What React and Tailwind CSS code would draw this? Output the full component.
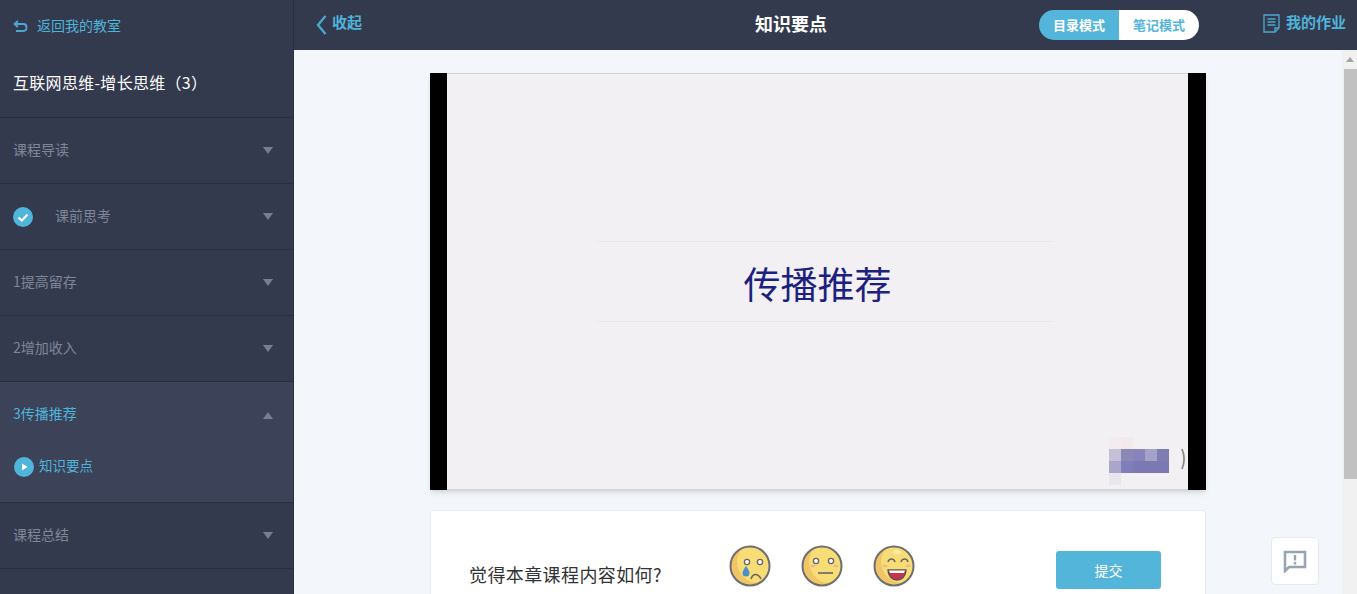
const font = { fontFamily: '"Noto Sans CJK SC", sans-serif' };

const Caret = ({ up }) => (
  <svg width="10" height="7" viewBox="0 0 10 7" className="shrink-0 fill-[#74808f]">
    <path d={up ? "M5 0L10 7H0Z" : "M0 0H10L5 7Z"} />
  </svg>
);

const MenuRow = ({ label, check }) => (
  <div className="h-[66px] border-b border-[#292e40] flex items-center pl-[13px] pr-5 text-sm text-[#7f8698]">
    {check && (
      <svg width="20" height="20" viewBox="0 0 20 20" className="mr-[22px] shrink-0">
        <circle cx="10" cy="10" r="10" fill="#4fb5da" />
        <path d="M5.5 10.5L8.8 13.5L14.5 7.5" fill="none" stroke="#fff" strokeWidth="2" />
      </svg>
    )}
    <span className="flex-1 -translate-y-0.5">{label}</span>
    <Caret />
  </div>
);

const Sidebar = () => (
  <aside className="w-[294px] shrink-0 h-full bg-[#343a4e] border-r border-[#292e40]">
    <div className="h-[118px] border-b border-[#292e40] pl-[13px]">
      <div className="h-[52px] flex items-center text-sm text-[#4fb3d9]">
        <svg width="15" height="12" viewBox="0 0 15 12" fill="none" stroke="#4aa8cf" strokeWidth="1.8" className="mr-[9px]">
          <path d="M5 1L1.5 4L5 7M2 4H10.5C13 4 13.5 6 13.5 7.5C13.5 9.5 12.5 11 10.5 11H3" />
        </svg>
        <span className="-translate-y-px">返回我的教室</span>
      </div>
      <div className="h-[64px] flex items-center text-base text-white">
        <span className="-translate-y-0.5 tracking-[0.3px]">互联网思维-增长思维（3）</span>
      </div>
    </div>
    <MenuRow label="课程导读" />
    <MenuRow label="课前思考" check />
    <MenuRow label="1提高留存" />
    <MenuRow label="2增加收入" />
    <div className="h-[121px] bg-[#3c4257] border-b border-[#292e40] pl-[13px] pr-5 text-sm text-[#4fb3d9]">
      <div className="h-[66px] flex items-center justify-between">
        <span className="-translate-y-0.5">3传播推荐</span>
        <Caret up />
      </div>
      <div className="flex items-center mt-[9px]">
        <svg width="20" height="20" viewBox="0 0 20 20" className="ml-px mr-[5px]">
          <circle cx="10" cy="10" r="10" fill="#4fb5da" />
          <path d="M8 6.5L13.5 10L8 13.5Z" fill="#fff" />
        </svg>
        <span className="text-[13.5px] -translate-y-px">知识要点</span>
      </div>
    </div>
    <MenuRow label="课程总结" />
  </aside>
);

const TopBar = () => (
  <header className="h-[50px] shrink-0 bg-[#343a4e] flex items-center pl-[22px] text-[#4fb3d9]">
    <svg width="11" height="20" viewBox="0 0 11 20" fill="none" stroke="#4aa8cf" strokeWidth="2.4" className="mr-[5px]">
      <path d="M9.5 1L2 10L9.5 19" />
    </svg>
    <span className="text-[15px] font-bold -translate-y-[3px]">收起</span>
    <h1 className="ml-[393px] text-lg font-bold text-white -translate-y-0.5">知识要点</h1>
    <div className="ml-[212px] w-40 h-[30px] rounded-full overflow-hidden flex text-[13px] font-bold">
      <div className="w-20 bg-[#54b5da] text-white flex items-center justify-center">目录模式</div>
      <div className="w-20 bg-white text-[#54b5da] flex items-center justify-center">笔记模式</div>
    </div>
    <svg width="17" height="19" viewBox="0 0 17 19" fill="none" stroke="#4aa8cf" strokeWidth="1.3" className="ml-16 mr-[6px] -translate-y-0.5">
      <path d="M1 1H16V14L12 18H1Z" />
      <path d="M4.5 5H12.5M4.5 8H12.5M4.5 11H12.5" />
      <path d="M12 18V14H16" />
    </svg>
    <span className="text-[15px] font-bold -translate-y-[3px]">我的作业</span>
  </header>
);

const Face = ({ children }) => (
  <svg width="42" height="42" viewBox="0 0 42 42">
    <circle cx="21" cy="21" r="19.5" fill="#f8dc76" />
    <path d="M13 3.500A19 19 0 0 0 21 40A19 19 0 0 0 29 38A21 21 0 0 1 13 3.500Z" fill="#efc566" />
    <circle cx="21" cy="21" r="19.5" fill="none" stroke="#6e6e6e" strokeWidth="2" />
    {children}
  </svg>
);

const Faces = () => (
  <div className="ml-[67px] flex gap-[30px] mt-[-12px]">
    <Face>
      <circle cx="18" cy="17" r="2.6" fill="#fff" stroke="#666" strokeWidth="1.3" />
      <circle cx="31" cy="17" r="2.6" fill="#fff" stroke="#666" strokeWidth="1.3" />
      <path d="M17 21C14 25.500 13.500 27 13.500 28A3.500 3.500 0 0 0 20.500 28C20.500 27 20 25.500 17 21Z" fill="#4a90c8" />
      <path d="M22 34C24 28 29 28 32 34" fill="none" stroke="#666" strokeWidth="1.6" />
    </Face>
    <Face>
      <circle cx="15" cy="16" r="2.6" fill="#fff" stroke="#666" strokeWidth="1.3" />
      <circle cx="30" cy="16" r="2.6" fill="#fff" stroke="#666" strokeWidth="1.3" />
      <ellipse cx="12" cy="21" rx="2.500" ry="1.300" fill="#f4b48c" />
      <ellipse cx="35" cy="21" rx="2.500" ry="1.300" fill="#f4b48c" />
      <path d="M17 28H32" stroke="#666" strokeWidth="1.6" />
    </Face>
    <Face>
      <ellipse cx="24" cy="7" rx="4" ry="2" fill="#fbe9a6" />
      <path d="M15 17C16 13 21 13 22 17M28 17C29 13 34 13 35 17" fill="none" stroke="#666" strokeWidth="1.5" />
      <ellipse cx="12" cy="21" rx="2.500" ry="1.300" fill="#f4b48c" />
      <ellipse cx="35" cy="21" rx="2.500" ry="1.300" fill="#f4b48c" />
      <path d="M15 25H33C33 31 29 35 24 35C19 35 15 31 15 25Z" fill="#c8324a" stroke="#555" strokeWidth="1.300" />
      <path d="M16 25.500H32L31 28H17Z" fill="#fff" />
    </Face>
  </div>
);

const Slide = () => (
  <div className="relative h-[417px] bg-black pl-[17px] pr-[18px] shadow-md">
    <div className="h-full bg-[#f2f0f3] border-y border-[#d4d2d6] flex flex-col items-center pt-[167px]">
      <div className="ml-[15px] w-[456px] h-[81px] border-y border-[#e9e7ea] flex items-center justify-center text-[37px] leading-none text-[#1c2180] pt-1 pr-[15px]">
        传播推荐
      </div>
    </div>
    {/* blurred-out watermark */}
    <div className="absolute left-[679px] top-[364px] grid grid-cols-[repeat(5,12px)] grid-rows-[repeat(4,12px)]">
      <div className="bg-[#f3ecee]" />
      <div className="bg-[#f3e9ea]" />
      <div className="col-span-3" />
      <div className="bg-[#c5c0d8]" />
      <div className="bg-[#8c88b4]" />
      <div className="bg-[#8884bb]" />
      <div className="bg-[#a5a2c9]" />
      <div className="bg-[#7f7cb2]" />
      <div className="bg-[#aaa6ca]" />
      <div className="bg-[#7f7dbb]" />
      <div className="bg-[#7b78b3]" />
      <div className="bg-[#7b78b3]" />
      <div className="bg-[#7b78b3]" />
      <div className="bg-[#e9e6ef]" />
    </div>
    <svg width="4" height="22" viewBox="0 0 4 22" fill="none" className="absolute left-[751px] top-[375px]">
      <path d="M1 1C3.500 7 3.500 15 1 21" stroke="#8a8a8a" strokeWidth="1.800" />
    </svg>
  </div>
);

const Scrollbar = () => (
  <div className="w-[15px] shrink-0 bg-[#f1f1f1] pl-0.5">
    <div className="h-[19px] flex items-center justify-center pr-0.5">
      <svg width="8" height="5" viewBox="0 0 8 5" className="fill-[#a3a3a3]">
        <path d="M4 0L8 5H0Z" />
      </svg>
    </div>
    <div className="h-[410px] bg-[#c1c1c1]" />
  </div>
);

const App = () => (
  <div className="relative w-full h-screen flex overflow-hidden bg-[#f3f6fa]" style={font}>
    <Sidebar />
    <main className="flex-1 h-full min-w-0 flex flex-col">
      <TopBar />
      <div className="flex-1 min-h-0 flex">
        <div className="flex-1 min-w-0 overflow-hidden pt-[23px] flex flex-col items-center">
          <div className="w-[776px] shrink-0">
            <Slide />
            <div className="mt-5 h-[120px] bg-white border border-[#e8edf2] rounded-t flex items-start pt-9 pl-[38px]">
              <span className="text-lg leading-[36px] text-[#333] w-[193px] mt-[9px] tracking-[0.4px] whitespace-nowrap">觉得本章课程内容如何?</span>
              <div className="mt-[10px]"><Faces /></div>
              <button className="ml-[141px] mt-1 w-[105px] h-[38px] rounded-[3px] bg-[#54b5da] text-sm text-white">提交</button>
            </div>
          </div>
        </div>
        <Scrollbar />
      </div>
    </main>
    <button className="absolute left-[1271px] top-[537px] w-12 h-12 bg-white border border-[#e6eaef] rounded flex items-center justify-center">
      <svg width="24" height="23" viewBox="0 0 24 23" fill="none">
        <path d="M2 2H22V17H6L2 21Z" stroke="#98a4b1" strokeWidth="2.600" />
        <path d="M12 5V10.500M12 12V14.500" stroke="#98a4b1" strokeWidth="2.400" />
      </svg>
    </button>
  </div>
);

export default App;
